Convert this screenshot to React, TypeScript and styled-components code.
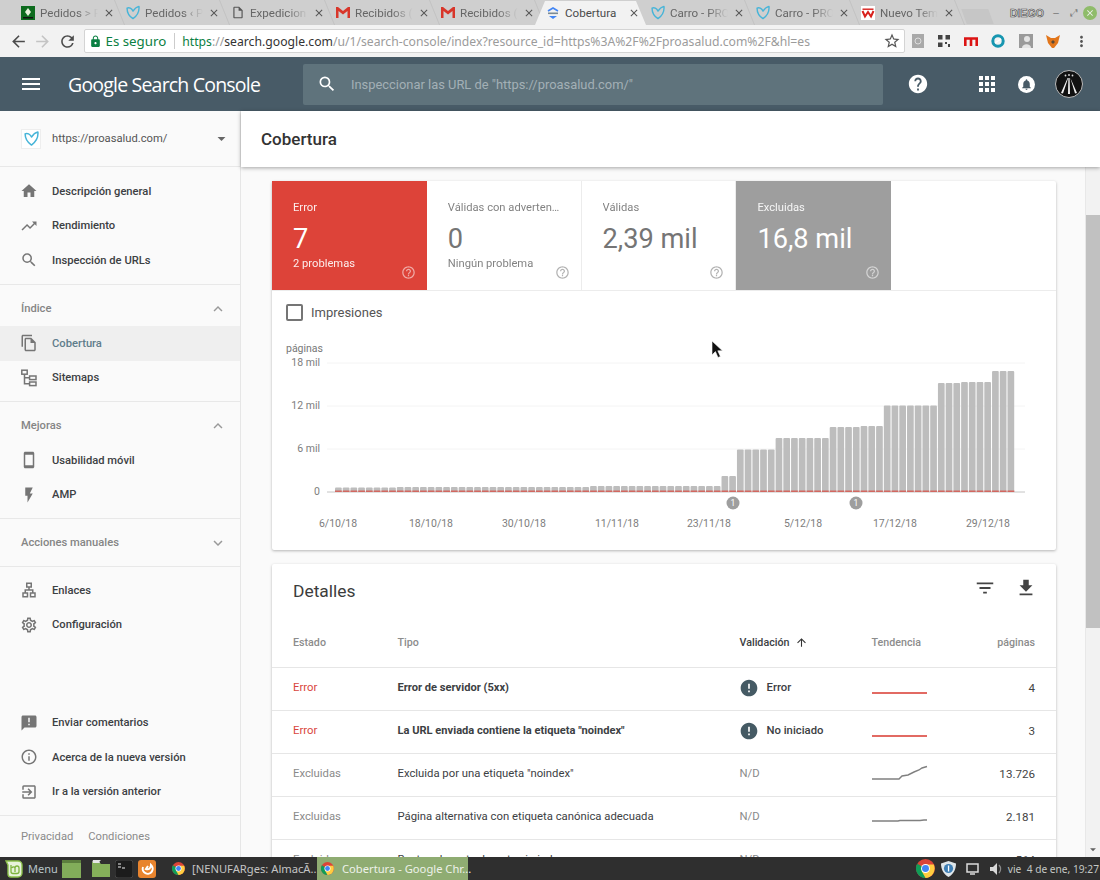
import React from "react";
import styled, { createGlobalStyle } from "styled-components";
import {
  MdMenu, MdSearch, MdHelp, MdApps, MdNotifications, MdHome, MdTrendingUp, MdOutlineFileCopy,
  MdOutlineStayCurrentPortrait, MdFlashOn, MdOutlineLan, MdOutlineSettings, MdAnnouncement,
  MdInfoOutline, MdOutlineExitToApp, MdExpandLess, MdExpandMore, MdArrowDropDown, MdFilterList,
  MdFileDownload, MdArrowUpward, MdHelpOutline, MdError, MdLock, MdArrowBack, MdArrowForward,
  MdRefresh, MdStarBorder, MdMoreVert, MdClose, MdOutlineInsertDriveFile,
} from "react-icons/md";

const GlobalStyle = createGlobalStyle`
  html, body { margin: 0; padding: 0; height: 100%; overflow: hidden; }
  body { font-family: Roboto, "Liberation Sans", sans-serif; color: #333; }
  * { box-sizing: border-box; }
`;

const Screen = styled.div`
  position: relative;
  width: 1100px;
  height: 880px;
  display: flex;
  flex-direction: column;
  overflow: hidden;
  background: #fafafa;
`;

/* browser chrome */
const TabStrip = styled.div`
  height: 25px;
  display: flex;
  align-items: center;
  padding-left: 13px;
  background: #cfcfcf;
`;

const Tab = styled.div<{ $active?: boolean }>`
  position: relative;
  width: 105px;
  height: 25px;
  flex: none;
  display: flex;
  align-items: center;
  padding: 0 3px 0 8px;
  gap: 5px;
  &::before {
    content: "";
    position: absolute;
    z-index: 0;
    top: 1px;
    bottom: 0;
    left: -3px;
    right: -3px;
    background: ${(p) => (p.$active ? "#f2f2f2" : "transparent")};
    clip-path: polygon(0 100%, 10px 0, calc(100% - 10px) 0, 100% 100%);
  }
  &::after {
    content: "";
    position: absolute;
    display: ${(p) => (p.$active ? "none" : "block")};
    top: 0;
    right: -2px;
    width: 1px;
    height: 25px;
    background: #c2c2c2;
    transform: skewX(22deg);
  }
  > * { position: relative; z-index: 1; }
`;

const TabIcon = styled.span`
  width: 14px;
  height: 14px;
  flex: none;
  display: flex;
  align-items: center;
  justify-content: center;
  color: #555;
`;

const TabTitle = styled.span<{ $active?: boolean }>`
  flex: 1;
  min-width: 0;
  overflow: hidden;
  white-space: nowrap;
  font-size: 11.6px;
  color: ${(p) => (p.$active ? "#4a4a4a" : "#666")};
  mask-image: ${(p) => (p.$active ? "none" : "linear-gradient(to right, #000 65%, transparent 100%)")};
`;

const TabClose = styled.span`
  display: flex;
  flex: none;
  color: #555;
  font-size: 12px;
`;

const NewTab = styled.div`
  width: 27px;
  height: 15px;
  margin: 7px 0 0 6px;
  background: #c6c6c6;
  transform: skewX(20deg);
`;

const WindowControls = styled.div`
  margin-left: auto;
  display: flex;
  align-items: center;
  padding-right: 3px;
  font-family: "Liberation Sans", sans-serif;
`;

const UserName = styled.span`
  width: 37px;
  font-size: 10.5px;
  font-weight: 700;
  color: #e8e8e8;
  -webkit-text-stroke: 0.6px #444;
`;

const WinButton = styled.span<{ $close?: boolean }>`
  width: ${(p) => (p.$close ? "14px" : "18px")};
  height: 14px;
  display: flex;
  align-items: center;
  justify-content: center;
  border-radius: 50%;
  background: ${(p) => (p.$close ? "#8fbc6a" : "transparent")};
  color: ${(p) => (p.$close ? "#f2f2f2" : "#777")};
  font-size: 10px;
`;

const Toolbar = styled.div`
  height: 32px;
  display: flex;
  align-items: center;
  background: #f2f2f2;
  font-family: "Noto Sans", sans-serif;
`;

const NavButton = styled.span<{ $off?: boolean }>`
  width: 24.5px;
  display: flex;
  justify-content: center;
  flex: none;
  color: ${(p) => (p.$off ? "#c4c4c4" : "#4b4b4b")};
  font-size: 19px;
  &:first-child { margin-left: 6px; }
`;

const Omnibox = styled.div`
  width: 821px;
  height: 24px;
  margin-left: 4px;
  display: flex;
  align-items: center;
  background: #fff;
  border: 1px solid #d4d4d4;
  border-radius: 2px;
  padding: 0 3px 0 4px;
  font-size: 13.3px;
  white-space: nowrap;
`;

const SecureLabel = styled.span`
  display: flex;
  align-items: center;
  gap: 4px;
  color: #0b8043;
  padding-right: 8px;
  margin-right: 7px;
  border-right: 1px solid #ccc;
  line-height: 16px;
  svg { font-size: 13px; }
`;

const UrlPart = styled.span<{ $tone: "green" | "dark" | "soft" }>`
  font-size: 12.2px;
  color: ${(p) => ({ green: "#0b8043", dark: "#333", soft: "#9b9b9b" }[p.$tone])};
`;

const StarSlot = styled.span`
  margin-left: auto;
  display: flex;
  color: #555;
  font-size: 18px;
`;

const Extensions = styled.div`
  flex: 1;
  display: flex;
  align-items: center;
  justify-content: space-between;
  padding: 0 10px 0 7px;
  color: #555;
`;

/* console header */
const AppBar = styled.header`
  height: 54px;
  flex: none;
  display: flex;
  align-items: center;
  background: #485b67;
  color: #fff;
`;

const MenuSlot = styled.span`
  width: 68px;
  padding-left: 19px;
  display: flex;
  font-size: 24px;
`;

const Logo = styled.div`
  width: 235px;
  flex: none;
  font-family: "Open Sans", sans-serif;
  font-size: 19.5px;
  letter-spacing: -0.8px;
  white-space: nowrap;
`;

const SearchBox = styled.div`
  width: 580px;
  height: 41px;
  flex: none;
  display: flex;
  align-items: center;
  gap: 14px;
  padding-left: 14px;
  background: #5f737c;
  border-radius: 2px;
  font-size: 12.9px;
  color: #a3b0b6;
  svg { font-size: 20px; color: #fff; }
`;

const AppBarIcons = styled.div`
  flex: 1;
  display: flex;
  align-items: center;
  padding-left: 24px;
  font-size: 22px;
`;

const HelpSlot = styled.span`
  display: flex;
  font-size: 22px;
  margin-right: 46px;
`;

const AppsSlot = styled.span`
  display: flex;
  font-size: 24px;
  margin-right: 19px;
`;

const BellBadge = styled.span`
  width: 17px;
  height: 17px;
  display: flex;
  align-items: center;
  justify-content: center;
  border-radius: 50%;
  background: #fff;
  color: #485b67;
  font-size: 13px;
  margin-right: 20px;
`;

/* page body */
const Body = styled.div`
  flex: 1;
  min-height: 0;
  display: flex;
`;

const Sidebar = styled.aside`
  width: 241px;
  flex: none;
  display: flex;
  flex-direction: column;
  background: #fafafa;
  border-right: 1px solid #e6e6e6;
`;

const PropertyRow = styled.div`
  height: 56px;
  flex: none;
  display: flex;
  align-items: center;
  padding: 0 9px 0 21px;
  font-size: 11.2px;
  color: #555;
  border-bottom: 1px solid #e8e8e8;
`;

const PropertyIcon = styled.span`
  width: 20px;
  height: 20px;
  display: flex;
  align-items: center;
  justify-content: center;
  background: #fff;
  border: 1px solid #eee;
  margin-right: 11px;
`;

const PropertyCaret = styled.span`
  margin-left: auto;
  display: flex;
  color: #666;
  font-size: 19px;
`;

const NavSection = styled.nav<{ $grow?: boolean; $last?: boolean; $pad?: string }>`
  padding: ${(p) => p.$pad ?? "6.5px 0 5.5px"};
  flex: ${(p) => (p.$grow ? 1 : "none")};
  border-bottom: ${(p) => (p.$last ? "0" : "1px solid #e8e8e8")};
`;

const SectionHead = styled.div`
  height: 35px;
  display: flex;
  align-items: center;
  justify-content: space-between;
  padding: 0 13px 0 21px;
  font-size: 11.2px;
  font-weight: 500;
  color: #858585;
  svg { font-size: 18px; color: #999; }
`;

const NavItem = styled.div<{ $active?: boolean }>`
  height: 34.5px;
  display: flex;
  align-items: center;
  padding-left: 20px;
  gap: 14px;
  font-size: 11.2px;
  font-weight: 500;
  color: ${(p) => (p.$active ? "#607d8b" : "#3c4043")};
  background: ${(p) => (p.$active ? "#efefef" : "transparent")};
`;

const NavIcon = styled.span`
  width: 18px;
  height: 18px;
  flex: none;
  display: flex;
  align-items: center;
  justify-content: center;
  color: #757575;
  font-size: 18px;
`;

const SidebarFooter = styled.footer`
  height: 41px;
  flex: none;
  display: flex;
  align-items: center;
  gap: 15px;
  padding: 0 0 1px 21px;
  font-size: 11.2px;
  color: #8a8a8a;
`;

const Main = styled.main`
  flex: 1;
  min-width: 0;
  display: flex;
  flex-direction: column;
`;

const TitleBar = styled.div`
  position: relative;
  z-index: 2;
  height: 56px;
  flex: none;
  display: flex;
  align-items: center;
  padding-left: 20px;
  background: #fff;
  box-shadow: 0 1px 4px rgba(0, 0, 0, 0.35);
  font-size: 17px;
  font-weight: 500;
  color: #333;
`;

const ScrollArea = styled.div`
  flex: 1;
  min-height: 0;
  display: flex;
`;

const Content = styled.div`
  flex: 1;
  min-width: 0;
  overflow: hidden;
  padding: 14px 0 0 31px;
  display: flex;
  flex-direction: column;
  gap: 14px;
  background: #fafafa;
`;

const Card = styled.section`
  width: 784px;
  flex: none;
  background: #fff;
  box-shadow: 0 1px 3px rgba(0, 0, 0, 0.28);
  border-radius: 2px;
`;

const Scrollbar = styled.div`
  width: 15px;
  flex: none;
  display: flex;
  flex-direction: column;
  background: #f2f2f2;
  border-left: 1px solid #e8e8e8;
`;

const ScrollArrow = styled.span`
  height: 15px;
  flex: none;
  display: flex;
  align-items: center;
  justify-content: center;
  color: #606060;
  font-size: 15px;
`;

const ScrollThumb = styled.div`
  height: 413px;
  margin-top: 33px;
  flex: none;
  background: #c1c1c1;
`;

const ScrollGap = styled.div`
  flex: 1;
`;

/* summary tiles */
const Tiles = styled.div`
  display: flex;
  height: 110px;
  border-bottom: 1px solid #ececec;
`;

const toneBg = { error: "#dd4339", plain: "#fff", excluded: "#9e9e9e" };

const Tile = styled.div<{ $tone: "error" | "plain" | "excluded" }>`
  position: relative;
  width: 154.8px;
  flex: none;
  padding: 20px 20px 0 21px;
  background: ${(p) => toneBg[p.$tone]};
  color: ${(p) => (p.$tone === "plain" ? "#757575" : "#fff")};
  border-right: ${(p) => (p.$tone === "plain" ? "1px solid #ececec" : "0")};
`;

const TileLabel = styled.div`
  font-size: 11.2px;
  line-height: 14px;
  white-space: nowrap;
  overflow: hidden;
  text-overflow: ellipsis;
  opacity: 0.9;
`;

const TileValue = styled.div`
  margin-top: 6px;
  font-size: 27.2px;
  line-height: 36px;
  font-weight: 400;
  white-space: nowrap;
`;

const TileNote = styled.div`
  font-size: 11.2px;
  line-height: 14px;
  opacity: 0.9;
`;

const TileHelp = styled.span`
  position: absolute;
  right: 11px;
  bottom: 10px;
  display: flex;
  font-size: 15px;
  opacity: 0.55;
`;

const CheckRow = styled.label`
  height: 44px;
  display: flex;
  align-items: center;
  gap: 8px;
  padding: 0 0 2px 14px;
  font-size: 13px;
  color: #555;
`;

const CheckBox = styled.span`
  width: 17px;
  height: 17px;
  border: 2px solid #757575;
  border-radius: 2px;
`;

const ChartSvg = styled.svg`
  display: block;
  width: 784px;
  height: 215px;
  font-family: Roboto, sans-serif;
`;

/* details table */
const DetailsHead = styled.div`
  height: 55px;
  display: flex;
  align-items: center;
  justify-content: space-between;
  padding: 0 19px 1px 21px;
  font-size: 17.4px;
  color: #3c3c3c;
`;

const DetailsActions = styled.div`
  display: flex;
  gap: 19px;
  font-size: 22px;
  color: #444;
  margin-top: -6px;
`;

const Row = styled.div<{ $head?: boolean }>`
  height: ${(p) => (p.$head ? "49px" : "43px")};
  display: grid;
  grid-template-columns: 104.5px 342px 132px 1fr auto;
  align-items: center;
  padding: ${(p) => (p.$head ? "0 21px 1px" : "0 21px 3px")};
  border-bottom: 1px solid #e6e6e6;
  font-size: ${(p) => (p.$head ? "10.7px" : "11.3px")};
`;

const HeadCell = styled.div<{ $on?: boolean }>`
  display: flex;
  align-items: center;
  gap: 6px;
  font-weight: 500;
  color: ${(p) => (p.$on ? "#3c4043" : "#8c8c8c")};
  svg { font-size: 13px; color: #333; }
`;

const StatusCell = styled.div<{ $error?: boolean }>`
  color: ${(p) => (p.$error ? "#d9463d" : "#8a8a8a")};
`;

const TypeCell = styled.div<{ $strong?: boolean }>`
  color: #3c4043;
  font-weight: ${(p) => (p.$strong ? 700 : 400)};
  font-size: ${(p) => (p.$strong ? "11.1px" : "11.3px")};
`;

const ValidationCell = styled.div<{ $flag?: boolean }>`
  display: flex;
  align-items: center;
  gap: 8px;
  font-weight: ${(p) => (p.$flag ? 500 : 400)};
  color: ${(p) => (p.$flag ? "#3c4043" : "#8a8a8a")};
  svg { font-size: 20px; color: #455a64; margin-left: -1px; }
`;

const Spark = styled.svg`
  display: block;
  width: 56px;
  height: 20px;
`;

const CountCell = styled.div`
  text-align: right;
  font-size: 11.6px;
  color: #444;
`;

/* desktop panel */
const Taskbar = styled.div`
  position: relative;
  z-index: 3;
  height: 23px;
  flex: none;
  display: flex;
  align-items: stretch;
  background: #2f2f2f;
  color: #c4c8c4;
  font-family: "Noto Sans", sans-serif;
  font-size: 11.2px;
  white-space: nowrap;
`;

const Launchers = styled.div`
  display: flex;
  align-items: center;
  padding-left: 5px;
`;

const MenuLabel = styled.span`
  width: 39px;
  padding-left: 5px;
  font-size: 11px;
  color: #b8c4c8;
`;

const Launcher = styled.span<{ $gap: number }>`
  display: flex;
  margin-right: ${(p) => p.$gap}px;
`;

const WindowButton = styled.div<{ $active?: boolean }>`
  display: flex;
  align-items: center;
  gap: ${(p) => (p.$active ? "8px" : "7px")};
  width: ${(p) => (p.$active ? "151px" : "145px")};
  padding-left: ${(p) => (p.$active ? "4px" : "0")};
  background: ${(p) => (p.$active ? "#8fac72" : "transparent")};
  color: ${(p) => (p.$active ? "#eef2ea" : "#c4c4c4")};
  svg { flex: none; }
`;

const Tray = styled.div`
  margin-left: auto;
  display: flex;
  align-items: center;
  padding-right: 1px;
`;

const TraySlot = styled.span<{ $gap: number }>`
  display: flex;
  margin-right: ${(p) => p.$gap}px;
`;

const Clock = styled.span`
  font-size: 10.2px;
`;

const Pointer = styled.svg`
  position: absolute;
  left: 711px;
  top: 341px;
  width: 12px;
  height: 18px;
`;

const Heart = ({ size = 15 }: { size?: number }) => (
  <svg width={size} height={size} viewBox="0 0 16 16" fill="none">
    <path d="M1.2 3 C3.5 1.8 6.5 3.2 8 6.4 C9.5 4 11.5 1.8 14.8 1 C15.4 6.5 12.4 11.8 8 15 C4 12.4 1.2 7.6 1.2 3Z" stroke="#46b4d8" strokeWidth="1.6" strokeLinejoin="round" />
  </svg>
);

const Gmail = () => (
  <svg width="14" height="11" viewBox="0 0 14 11">
    <path d="M0 0h2l5 4 5-4h2v11h-2.5V4L7 7.5 2.5 4v7H0z" fill="#d8362a" />
  </svg>
);

const ShopFavicon = () => (
  <svg width="14" height="14" viewBox="0 0 14 14">
    <rect width="14" height="14" fill="#0d6b1e" />
    <path d="M7 2 L10 6 L7 10 L4 6Z" fill="#e8f2dc" />
    <rect x="2" y="11" width="10" height="1.5" fill="#111" />
  </svg>
);

const GoogleFavicon = () => (
  <svg width="14" height="14" viewBox="0 0 14 14">
    <path d="M2 5 L7 2 L12 5" fill="none" stroke="#4285f4" strokeWidth="1.6" />
    <rect x="2" y="6.5" width="10" height="1.6" fill="#7b8a93" />
    <path d="M3 10 H11 L7 13Z" fill="#4285f4" />
  </svg>
);

const WFavicon = () => (
  <svg width="14" height="14" viewBox="0 0 14 14">
    <rect width="14" height="14" fill="#fff" />
    <path d="M1.5 5 L4 10.5 L7 6 L10 10.5 L12.5 5" fill="none" stroke="#d8201c" strokeWidth="2" />
    <rect x="1.5" y="2.5" width="11" height="1.4" fill="#d8201c" />
  </svg>
);

const ChromeIcon = ({ size = 13 }: { size?: number }) => (
  <svg width={size} height={size} viewBox="0 0 24 24">
    <circle cx="12" cy="12" r="12" fill="#db4437" />
    <path d="M12 12 L1.6 6 A12 12 0 0 0 12 24 L18 13.6Z" fill="#0f9d58" />
    <path d="M12 7 H22.4 A12 12 0 0 1 12 24 L7 15Z" fill="#ffcd40" />
    <circle cx="12" cy="12" r="5.6" fill="#fff" />
    <circle cx="12" cy="12" r="4.4" fill="#4285f4" />
  </svg>
);

const Avatar = () => (
  <svg width="28" height="28" viewBox="0 0 28 28">
    <circle cx="14" cy="14" r="13.5" fill="#111" stroke="#bbb" strokeWidth="1" />
    <path d="M12.6 8 L6 23 L8 23.6 L13.2 8Z M13.4 8 H14.6 L15 24 H13Z M15.4 8 L20 23.6 L22 23 L15.4 8Z" fill="#f2f2f2" />
    <circle cx="10.5" cy="5.5" r="0.9" fill="#ddd" />
    <circle cx="14" cy="5" r="0.9" fill="#ddd" />
    <circle cx="17.5" cy="5.5" r="0.9" fill="#ddd" />
  </svg>
);

const SitemapIcon = () => (
  <svg width="18" height="18" viewBox="0 0 18 18" fill="none" stroke="#757575" strokeWidth="1.5">
    <rect x="1.8" y="1.2" width="5.4" height="4" />
    <rect x="9.6" y="7" width="6.4" height="3.6" />
    <rect x="9.6" y="13" width="6.4" height="3.6" />
    <path d="M4.5 5.2 V14.8 H9.6 M4.5 8.8 H9.6" />
  </svg>
);

const MintLogo = () => (
  <svg width="18" height="18" viewBox="0 0 18 18" fill="none">
    <path d="M1 1 H13 A4 4 0 0 1 17 5 V13 A4 4 0 0 1 13 17 H6 A3 3 0 0 1 3 14 V5 Z" fill="#e8f3dc" stroke="#8cc14c" strokeWidth="1.4" />
    <path d="M6 5 V11.5 A2 2 0 0 0 8 13.5 H12 A2 2 0 0 0 14 11.5 V8 A1.6 1.6 0 0 0 10 8 V12 M10 8 A1.6 1.6 0 0 0 7 8" stroke="#7eb43f" strokeWidth="1.3" />
  </svg>
);

const GreenBox = () => (
  <svg width="19" height="18" viewBox="0 0 19 18">
    <rect width="19" height="18" fill="#82ad5a" />
    <rect width="19" height="3" fill="#5c7f3e" />
  </svg>
);

const FolderIcon = () => (
  <svg width="18" height="17" viewBox="0 0 18 17">
    <path d="M0 3 A1 1 0 0 1 1 2 H7 L9 0 H1 Z" fill="#e4e4e4" />
    <path d="M0 2 H7 L9 4 H18 V17 H0Z" fill="#85b05a" />
    <path d="M1 1 H7 L8 3 H1Z" fill="#e6e6e6" />
  </svg>
);

const TerminalIcon = () => (
  <svg width="18" height="18" viewBox="0 0 18 18">
    <rect width="18" height="18" rx="3" fill="#1c1c1c" stroke="#444" />
    <path d="M3 4 H6 M3 7 H6 M7 8 H10" stroke="#eee" strokeWidth="1.1" />
  </svg>
);

const OrangeApp = () => (
  <svg width="18" height="18" viewBox="0 0 18 18">
    <rect width="18" height="18" rx="3" fill="#e8842e" />
    <path d="M5 7 A5 5 0 1 0 13 5 C13 8 11 10 8 9 L10 6" fill="none" stroke="#fff" strokeWidth="2" />
  </svg>
);

const ShieldIcon = () => (
  <svg width="15" height="16" viewBox="0 0 15 16">
    <path d="M7.5 0 L15 2.5 C15 9 12 13.5 7.5 16 C3 13.5 0 9 0 2.5Z" fill="#dfe6ea" />
    <circle cx="7.5" cy="7.5" r="4.6" fill="#3f7fb5" />
    <rect x="6.9" y="4.5" width="1.3" height="6" fill="#fff" />
  </svg>
);

const MonitorIcon = () => (
  <svg width="13" height="12" viewBox="0 0 13 12" fill="none" stroke="#dcdcdc" strokeWidth="1.5">
    <rect x="1" y="1" width="11" height="8" />
    <path d="M4 11 H9" />
  </svg>
);

const SpeakerIcon = () => (
  <svg width="13" height="14" viewBox="0 0 13 14">
    <path d="M0 5 H3 L7 1 V13 L3 9 H0Z" fill="#d8d8d8" />
    <path d="M9 3 A6 6 0 0 1 9 11" stroke="#8a8a8a" strokeWidth="1.4" fill="none" />
  </svg>
);

const QrExt = () => (
  <svg width="14" height="14" viewBox="0 0 14 14" fill="#444">
    <path d="M1 1h4.5v4.5H1z M8.5 1H13v4.5H8.5z M1 8.5h4.5V13H1z M8 8h2v2H8z M11 10h2v3h-2z" />
  </svg>
);

const GrayExt = () => (
  <svg width="12" height="14" viewBox="0 0 12 14">
    <rect width="12" height="14" fill="#a9a9a9" />
    <circle cx="6" cy="7" r="3" fill="none" stroke="#ddd" />
  </svg>
);

const MailExt = () => (
  <svg width="14" height="10" viewBox="0 0 14 10" fill="none" stroke="#dc1414" strokeWidth="2.6">
    <path d="M1.3 10 V2.5 H7 V10 M7 2.5 H12.7 V10" />
  </svg>
);

const RingExt = () => (
  <svg width="14" height="14" viewBox="0 0 14 14" fill="none">
    <circle cx="7" cy="7" r="5.2" stroke="#1796b0" strokeWidth="3" />
    <path d="M4 9 L10 5" stroke="#fff" strokeWidth="1.3" />
  </svg>
);

const PersonExt = () => (
  <svg width="14" height="14" viewBox="0 0 14 14">
    <rect width="14" height="14" fill="#9a9a9a" />
    <circle cx="8" cy="5" r="3" fill="#e4e4e4" />
    <path d="M3 14 C3 9 12 9 12 14Z" fill="#e4e4e4" />
  </svg>
);

const FoxExt = () => (
  <svg width="14" height="13" viewBox="0 0 14 13">
    <path d="M0 0 L5 3 H9 L14 0 L12 8 L8 13 H6 L2 8Z" fill="#e2761b" />
    <path d="M5 7 L7 9 L9 7 L7 5Z" fill="#5c4a36" />
  </svg>
);

const tabs: { title: string; icon: React.ReactNode; active?: boolean }[] = [
  { title: "Pedidos > Proa", icon: <ShopFavicon /> },
  { title: "Pedidos ‹ Proa", icon: <Heart /> },
  { title: "Expedicion", icon: <MdOutlineInsertDriveFile size={15} /> },
  { title: "Recibidos (2)", icon: <Gmail /> },
  { title: "Recibidos (3)", icon: <Gmail /> },
  { title: "Cobertura", icon: <GoogleFavicon />, active: true },
  { title: "Carro - PROA", icon: <Heart /> },
  { title: "Carro - PROA", icon: <Heart /> },
  { title: "Nuevo Tema", icon: <WFavicon /> },
];

// alturas de las barras, de izquierda a derecha
const bars = [
  ...Array(8).fill(4.5), ...Array(25).fill(5), ...Array(17).fill(6), 16, 16,
  ...Array(5).fill(42.5), ...Array(7).fill(54), ...Array(4).fill(65), ...Array(3).fill(66),
  ...Array(7).fill(86.5), ...Array(3).fill(109), ...Array(4).fill(110), ...Array(3).fill(121),
];

const yLabels: [string, number][] = [["18 mil", 28], ["12 mil", 71], ["6 mil", 114], ["0", 157]];
const xLabels: [string, number][] = [
  ["6/10/18", 66], ["18/10/18", 159], ["30/10/18", 252], ["11/11/18", 345],
  ["23/11/18", 437], ["5/12/18", 531], ["17/12/18", 623], ["29/12/18", 716],
];

const Chart = () => (
  <ChartSvg viewBox="0 0 784 215">
    <text x="14" y="17" fontSize="10.5" fill="#777">páginas</text>
    {yLabels.map(([label, y]) => (
      <React.Fragment key={label}>
        <line x1="55" x2="753" y1={y} y2={y} stroke={label === "0" ? "#c4c4c4" : "#f4f4f4"} strokeWidth="1" />
        <text x="48" y={y + 3} fontSize="10.5" fill="#7d7d7d" textAnchor="end">{label}</text>
      </React.Fragment>
    ))}
    {bars.map((h, i) => {
      const x = 63 + i * 7.73;
      return (
        <g key={i}>
          <path d={`M${x} 157 V${157 - h + 1} q0 -1 1 -1 H${x + 5.7} q1 0 1 1 V157Z`} fill="#bdbdbd" />
          <rect x={x} y="155.6" width="6.8" height="1.2" fill="#d9534a" />
        </g>
      );
    })}
    {[461, 584].map((x) => (
      <g key={x}>
        <circle cx={x} cy="168" r="6.5" fill="#9e9e9e" />
        <text x={x} y="171" fontSize="8.5" fill="#fff" textAnchor="middle">1</text>
      </g>
    ))}
    {xLabels.map(([label, x]) => (
      <text key={label} x={x} y="192" fontSize="10.5" fill="#7d7d7d" textAnchor="middle">{label}</text>
    ))}
  </ChartSvg>
);

const sparkRed = "M0 15 H55";
const rows = [
  { status: "Error", type: "Error de servidor (5xx)", flag: "Error", spark: sparkRed, count: "4" },
  { status: "Error", type: 'La URL enviada contiene la etiqueta "noindex"', flag: "No iniciado", spark: sparkRed, count: "3" },
  { status: "Excluidas", type: 'Excluida por una etiqueta "noindex"', spark: "M0 15 H27 L30 12 L36 11 L42 8 L47 6 L50 4 L55 2.5", count: "13.726" },
  { status: "Excluidas", type: "Página alternativa con etiqueta canónica adecuada", spark: "M0 14 H26 L28 13.5 H48 L52 13 H55", count: "2.181" },
  { status: "Excluidas", type: "Rastreada: actualmente sin indexar", spark: "M0 14 H20 L30 12 H55", count: "564" },
];

export default function App() {
  return (
    <Screen>
      <GlobalStyle />
      <TabStrip>
        {tabs.map((t, i) => (
          <Tab key={i} $active={t.active}>
            <TabIcon>{t.icon}</TabIcon>
            <TabTitle $active={t.active}>{t.title}</TabTitle>
            <TabClose><MdClose /></TabClose>
          </Tab>
        ))}
        <NewTab />
        <WindowControls>
          <UserName>DIEGO</UserName>
          <WinButton>–</WinButton>
          <WinButton>⤢</WinButton>
          <WinButton $close><MdClose /></WinButton>
        </WindowControls>
      </TabStrip>
      <Toolbar>
        <NavButton><MdArrowBack /></NavButton>
        <NavButton $off><MdArrowForward /></NavButton>
        <NavButton><MdRefresh /></NavButton>
        <Omnibox>
          <SecureLabel><MdLock /> Es seguro</SecureLabel>
          <UrlPart $tone="green">https</UrlPart>
          <UrlPart $tone="soft">://</UrlPart>
          <UrlPart $tone="dark">search.google.com</UrlPart>
          <UrlPart $tone="soft">/u/1/search-console/index?resource_id=https%3A%2F%2Fproasalud.com%2F&amp;hl=es</UrlPart>
          <StarSlot><MdStarBorder /></StarSlot>
        </Omnibox>
        <Extensions>
          <GrayExt />
          <QrExt />
          <MailExt />
          <RingExt />
          <PersonExt />
          <FoxExt />
          <MdMoreVert size={17} />
        </Extensions>
      </Toolbar>
      <AppBar>
        <MenuSlot><MdMenu /></MenuSlot>
        <Logo>Google Search Console</Logo>
        <SearchBox>
          <MdSearch />
          Inspeccionar las URL de "https://proasalud.com/"
        </SearchBox>
        <AppBarIcons>
          <HelpSlot><MdHelp /></HelpSlot>
          <AppsSlot><MdApps /></AppsSlot>
          <BellBadge><MdNotifications /></BellBadge>
          <Avatar />
        </AppBarIcons>
      </AppBar>
      <Body>
        <Sidebar>
          <PropertyRow>
            <PropertyIcon><Heart /></PropertyIcon>
            https://proasalud.com/
            <PropertyCaret><MdArrowDropDown /></PropertyCaret>
          </PropertyRow>
          <NavSection $pad="7px 0 6px">
            <NavItem><NavIcon><MdHome /></NavIcon>Descripción general</NavItem>
            <NavItem><NavIcon><MdTrendingUp /></NavIcon>Rendimiento</NavItem>
            <NavItem><NavIcon><MdSearch /></NavIcon>Inspección de URLs</NavItem>
          </NavSection>
          <NavSection>
            <SectionHead>Índice<MdExpandLess /></SectionHead>
            <NavItem $active><NavIcon><MdOutlineFileCopy /></NavIcon>Cobertura</NavItem>
            <NavItem><NavIcon><SitemapIcon /></NavIcon>Sitemaps</NavItem>
          </NavSection>
          <NavSection>
            <SectionHead>Mejoras<MdExpandLess /></SectionHead>
            <NavItem><NavIcon><MdOutlineStayCurrentPortrait /></NavIcon>Usabilidad móvil</NavItem>
            <NavItem><NavIcon><MdFlashOn /></NavIcon>AMP</NavItem>
          </NavSection>
          <NavSection>
            <SectionHead>Acciones manuales<MdExpandMore /></SectionHead>
          </NavSection>
          <NavSection $grow $last $pad="6.5px 0 6px">
            <NavItem><NavIcon><MdOutlineLan /></NavIcon>Enlaces</NavItem>
            <NavItem><NavIcon><MdOutlineSettings /></NavIcon>Configuración</NavItem>
          </NavSection>
          <NavSection $pad="7px 0 6px">
            <NavItem><NavIcon><MdAnnouncement /></NavIcon>Enviar comentarios</NavItem>
            <NavItem><NavIcon><MdInfoOutline /></NavIcon>Acerca de la nueva versión</NavItem>
            <NavItem><NavIcon><MdOutlineExitToApp /></NavIcon>Ir a la versión anterior</NavItem>
          </NavSection>
          <SidebarFooter>
            <span>Privacidad</span>
            <span>Condiciones</span>
          </SidebarFooter>
        </Sidebar>
        <Main>
          <TitleBar>Cobertura</TitleBar>
          <ScrollArea>
            <Content>
              <Card>
                <Tiles>
                  <Tile $tone="error">
                    <TileLabel>Error</TileLabel>
                    <TileValue>7</TileValue>
                    <TileNote>2 problemas</TileNote>
                    <TileHelp><MdHelpOutline /></TileHelp>
                  </Tile>
                  <Tile $tone="plain">
                    <TileLabel>Válidas con advertencias</TileLabel>
                    <TileValue>0</TileValue>
                    <TileNote>Ningún problema</TileNote>
                    <TileHelp><MdHelpOutline /></TileHelp>
                  </Tile>
                  <Tile $tone="plain">
                    <TileLabel>Válidas</TileLabel>
                    <TileValue>2,39 mil</TileValue>
                    <TileHelp><MdHelpOutline /></TileHelp>
                  </Tile>
                  <Tile $tone="excluded">
                    <TileLabel>Excluidas</TileLabel>
                    <TileValue>16,8 mil</TileValue>
                    <TileHelp><MdHelpOutline /></TileHelp>
                  </Tile>
                </Tiles>
                <CheckRow><CheckBox />Impresiones</CheckRow>
                <Chart />
              </Card>
              <Card>
                <DetailsHead>
                  Detalles
                  <DetailsActions>
                    <MdFilterList />
                    <MdFileDownload />
                  </DetailsActions>
                </DetailsHead>
                <Row $head>
                  <HeadCell>Estado</HeadCell>
                  <HeadCell>Tipo</HeadCell>
                  <HeadCell $on>Validación <MdArrowUpward /></HeadCell>
                  <HeadCell>Tendencia</HeadCell>
                  <HeadCell>páginas</HeadCell>
                </Row>
                {rows.map((r) => (
                  <Row key={r.type}>
                    <StatusCell $error={r.status === "Error"}>{r.status}</StatusCell>
                    <TypeCell $strong={r.status === "Error"}>{r.type}</TypeCell>
                    {r.flag ? (
                      <ValidationCell $flag><MdError />{r.flag}</ValidationCell>
                    ) : (
                      <ValidationCell>N/D</ValidationCell>
                    )}
                    <Spark viewBox="0 0 56 20">
                      <path d={r.spark} fill="none" stroke={r.status === "Error" ? "#d9392f" : "#808080"} strokeWidth="1.4" />
                    </Spark>
                    <CountCell>{r.count}</CountCell>
                  </Row>
                ))}
              </Card>
            </Content>
            <Scrollbar>
              <ScrollArrow />
              <ScrollThumb />
              <ScrollGap />
              <ScrollArrow><MdArrowDropDown /></ScrollArrow>
            </Scrollbar>
          </ScrollArea>
        </Main>
      </Body>
      <Taskbar>
        <Launchers>
          <MintLogo />
          <MenuLabel>Menu</MenuLabel>
          <Launcher $gap={11}><GreenBox /></Launcher>
          <Launcher $gap={5}><FolderIcon /></Launcher>
          <Launcher $gap={5}><TerminalIcon /></Launcher>
          <Launcher $gap={16}><OrangeApp /></Launcher>
        </Launchers>
        <WindowButton><ChromeIcon />[NENUFARges: AlmacÃ...</WindowButton>
        <WindowButton $active><ChromeIcon />Cobertura - Google Chr...</WindowButton>
        <Tray>
          <TraySlot $gap={6}><ChromeIcon size={19} /></TraySlot>
          <TraySlot $gap={10}><ShieldIcon /></TraySlot>
          <TraySlot $gap={11}><MonitorIcon /></TraySlot>
          <TraySlot $gap={5}><SpeakerIcon /></TraySlot>
          <Clock>vie&nbsp;&nbsp;4 de ene, 19:27</Clock>
        </Tray>
      </Taskbar>
      <Pointer viewBox="0 0 12 18">
        <path d="M1 0 V14 L4.4 10.6 L7 16.5 L9.4 15.4 L6.8 9.8 H11.5Z" fill="#111" stroke="#fff" strokeWidth="0.6" />
      </Pointer>
    </Screen>
  );
}
